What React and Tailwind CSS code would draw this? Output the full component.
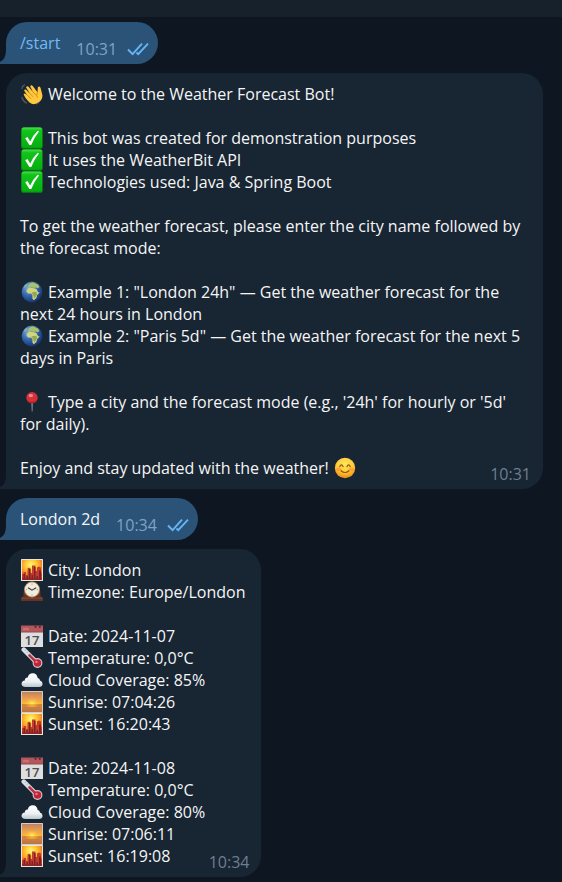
function Svg({ label, children }) {
  return (
    <svg role="img" aria-label={label} viewBox="0 0 22 22" className="mr-[5px] ml-px inline-block size-[22px] align-top">
      {children}
    </svg>
  );
}

function Wave() {
  return (
    <Svg label="Waving hand">
      <g fill="none" stroke="#46525c" strokeWidth="1.5" strokeLinecap="round">
        <path d="M1 5.5Q1.2 3 3.5 2M19 17Q18 19.8 15.5 20.8M1 14.5Q2 18.5 5.5 20" />
      </g>
      <path d="M8.5 19.5C5 16 3.5 13.5 2.6 11.2Q3.3 9.8 5 11.2L6.4 12.4 3.2 7.7Q3.5 6 5.1 6.8L9 10.7 5.1 4.5Q5.7 2.6 7.5 3.8L12 9 9.2 3.4Q10 1.6 11.7 2.9L16.5 9.3 16.8 4.4Q18.1 2.4 19.5 4.8L21.3 11.4Q22 16.5 18 19 13 23 8.5 19.5Z" fill="#ffc83d" />
      <path d="M6.4 12.4 9.8 15.5M9 10.7 12 13.6M12 9 14.8 12M16.5 9.3Q14.6 12.4 16.4 14.4" fill="none" stroke="#d88716" strokeWidth=".9" strokeLinecap="round" />
    </Svg>
  );
}

function Check() {
  return (
    <Svg label="Check">
      <defs>
        <linearGradient id="green" x2="0" y2="1">
          <stop stopColor="#4be04b" />
          <stop offset=".15" stopColor="#12c41c" />
          <stop offset="1" stopColor="#06ae0e" />
        </linearGradient>
      </defs>
      <rect x=".1" y=".2" width="21.6" height="21.6" rx="2.6" fill="#078a10" />
      <rect x=".7" y=".6" width="20.4" height="20.2" rx="2.2" fill="url(#green)" />
      <path d="M4.2 11.3 6.5 10.1 9.2 14.4Q12 8.2 16.8 3.8L18 4.4Q13.2 10.2 10.3 17.9L8.4 18Z" fill="#fff" />
    </Svg>
  );
}

function Globe() {
  return (
    <Svg label="Globe">
      <defs>
        <radialGradient id="sea" cx=".35" cy=".3" r=".75">
          <stop stopColor="#86b4dc" />
          <stop offset=".5" stopColor="#3568ae" />
          <stop offset="1" stopColor="#12306c" />
        </radialGradient>
      </defs>
      <circle cx="11" cy="11" r="10.4" fill="url(#sea)" />
      <path d="M7 4.2Q8.4 1.8 12 1.2L17 3.4 18.5 6 16.8 7.2 14.5 6.5 12.5 7 10.5 5.8 8 6.8Z" fill="#a9c26a" />
      <path d="M6.2 8.3Q8.8 6.3 11.3 7.1L15.2 7.7 17.2 11.2 18.8 11.4 16.2 14 15.4 16.9 12.8 19.2 11.5 17.8 11.4 14 10.1 12.5 6.9 12.4 5.4 10.3Z" fill="#d3d47e" />
      <path d="M10.5 11.2 15.5 10.8 16 13.8 13.4 17.5 12 14Z" fill="#8fa956" />
      <path d="M2.5 6.5Q4 3.6 6.5 2.5L6 4.5 4 6.6Z" fill="#8eb5a0" />
    </Svg>
  );
}

function Pin() {
  return (
    <Svg label="Pin">
      <path d="M10.2 10h1.8l-.4 10.5h-.9Z" fill="#7e878f" />
      <circle cx="11" cy="6.8" r="5.7" fill="#d5303c" />
      <path d="M5.9 9.2A5.7 5.7 0 0 0 16.3 8.7Q11 13 5.9 9.2" fill="#a91d2d" />
      <ellipse cx="9.8" cy="4.6" rx="2.3" ry="1.6" fill="#f58a87" />
    </Svg>
  );
}

function Smile() {
  return (
    <Svg label="Smile">
      <defs>
        <radialGradient id="face" cx=".5" cy=".3" r=".7">
          <stop stopColor="#ffe65c" />
          <stop offset=".6" stopColor="#ffc936" />
          <stop offset="1" stopColor="#ed8a13" />
        </radialGradient>
      </defs>
      <circle cx="11" cy="11" r="10.2" fill="url(#face)" />
      <ellipse cx="4.8" cy="12.3" rx="2.6" ry="1.9" fill="#ff8b32" opacity=".6" />
      <ellipse cx="17.2" cy="12.3" rx="2.6" ry="1.9" fill="#ff8b32" opacity=".6" />
      <path d="M5.8 9.6Q7.4 6.2 9 9.6M13 9.6Q14.6 6.2 16.2 9.6M7 13.8Q11 17.2 15 13.8" fill="none" stroke="#8a540d" strokeWidth="1.2" strokeLinecap="round" />
    </Svg>
  );
}

function Sunset() {
  return (
    <Svg label="City sunset">
      <defs>
        <radialGradient id="dusk" cx=".45" cy=".25" r=".8">
          <stop stopColor="#fff58a" />
          <stop offset=".25" stopColor="#ffd93f" />
          <stop offset=".55" stopColor="#f9a229" />
          <stop offset="1" stopColor="#d9481f" />
        </radialGradient>
      </defs>
      <rect width="22" height="22" rx=".6" fill="#efe3d8" />
      <path d="M1 1h20v20H1Z" fill="url(#dusk)" />
      <path d="M1 21v-6h1.5v-2H5v3h1.5V9.5L8 8.5l1.5 1V14H11V6.5h3.5V12H16V8.5l2-1 2 1V14h1v7Z" fill="#c43c2b" />
      <path d="M2.5 21v-6H4v6ZM5.5 21v-4H7v4ZM8 21V10h1.5v11ZM10.5 21v-5H12v5ZM13 21V8h1.5v13ZM15.5 21v-4H17v4ZM18 21v-9.500h2V21Z" fill="#7d2028" />
      <path d="M1 19h20v2H1Z" fill="#8c2428" opacity=".7" />
    </Svg>
  );
}

function Clock() {
  return (
    <Svg label="Clock">
      <path d="M0 20v-3.500l2.500-1.500V11Q3 9 4 8q.5-7.500 7-7.500T18 8q1 1 1.500 3v4l2.500 1.500V20Z" fill="#633327" />
      <path d="M1 17.200h20" stroke="#8a4b37" strokeWidth="1" />
      <circle cx="11" cy="8.500" r="7.900" fill="#b9986c" />
      <circle cx="11" cy="8.500" r="7" fill="#f1ebdc" />
      <path d="M7 6.700 11 9.200l4.200-2.400" fill="none" stroke="#373536" strokeWidth="1.100" />
      <path d="M11 2.700v1M11 13.500v1M5.100 8.600h1M15.900 8.600h1" stroke="#8a8074" strokeWidth=".8" />
    </Svg>
  );
}

function Calendar() {
  return (
    <Svg label="Calendar, 17">
      <path d="M0 5h22v17H0Z" fill="#dedede" />
      <path d="M0 .5h22v6.500H0Z" fill="#b4565b" />
      <path d="M0 6.700h22v.8H0Z" fill="#93454b" />
      <path d="M3 3v2.400M5 2.600v2.800M7 3v2.400" stroke="#e09a9c" strokeWidth=".8" />
      <circle cx="14.500" cy="1.800" r="1.100" fill="#542a32" />
      <circle cx="18.800" cy="1.800" r="1.100" fill="#542a32" />
      <text x="11" y="19.500" textAnchor="middle" fontSize="13" fontWeight="600" fill="#4d4d50">17</text>
    </Svg>
  );
}

function Thermometer() {
  return (
    <Svg label="Thermometer">
      <path d="m2.800 2.700 13 13" stroke="#d9e0e5" strokeWidth="4.600" strokeLinecap="round" />
      <circle cx="16.500" cy="16" r="4.900" fill="#c9cfd6" />
      <path d="m8.500 8.400 8 8" stroke="#c22b3b" strokeWidth="2.600" strokeLinecap="round" />
      <circle cx="16.500" cy="16" r="3.800" fill="#c6233a" />
      <path d="m5.200 2.500-1 1M7.200 4.500l-1 1M9.200 6.500l-1 1M11.200 8.500l-1 1" stroke="#747d85" strokeWidth=".8" />
      <circle cx="15.500" cy="14.900" r="1.200" fill="#f07a88" />
    </Svg>
  );
}

function Cloud() {
  return (
    <Svg label="Cloud">
      <defs>
        <linearGradient id="mist" x2="0" y2="1">
          <stop stopColor="#fff" />
          <stop offset=".6" stopColor="#edf1f4" />
          <stop offset="1" stopColor="#b9c6cf" />
        </linearGradient>
      </defs>
      <path d="M4.600 18Q.5 17.800.5 14.800.8 11.800 3.800 11.400 3.800 8.600 6.700 8.500 8 4.200 11.800 4.300 16 4.400 16.700 8.900 18.800 9 19 11.500 21.600 12.200 21.600 14.900 21.300 17.800 18 18Z" fill="url(#mist)" />
    </Svg>
  );
}

function Sunrise() {
  return (
    <Svg label="Sunrise">
      <defs>
        <linearGradient id="sky" x2="0" y2="1">
          <stop stopColor="#c08163" />
          <stop offset=".4" stopColor="#f0a548" />
          <stop offset=".58" stopColor="#fbb437" />
          <stop offset=".62" stopColor="#dc8a34" />
          <stop offset="1" stopColor="#b5744b" />
        </linearGradient>
        <radialGradient id="glow">
          <stop stopColor="#fff07a" />
          <stop offset=".3" stopColor="#ffd449" stopOpacity=".9" />
          <stop offset="1" stopColor="#ffb938" stopOpacity="0" />
        </radialGradient>
      </defs>
      <rect width="22" height="22" rx=".6" fill="#dccabf" />
      <path d="M1 1h20v20H1Z" fill="url(#sky)" />
      <path d="m11 5 .7 5 4.300-3-3 4 7 1.500H2L9 11 6 7l4.300 3Z" fill="#ffcb56" opacity=".45" />
      <ellipse cx="11" cy="12.500" rx="8" ry="5" fill="url(#glow)" />
      <path d="M1 14h20M3 16.500h16" stroke="#c97b35" strokeWidth=".6" />
    </Svg>
  );
}

function Ticks() {
  return (
    <svg role="img" aria-label="Read" viewBox="0 0 22 14" className="h-3.5 w-[22px]">
      <path d="m1 7.500 4.600 4.600L15 1.600M9.500 10.500l1.700 1.600L21 1.600" fill="none" stroke="#64b5f5" strokeWidth="1.900" />
    </svg>
  );
}

function Tail({ className }) {
  return (
    <svg aria-hidden="true" viewBox="0 0 6 14" className={`absolute bottom-0 -left-1.5 h-3.5 w-1.5 ${className}`}>
      <path d="M6 0Q6 9 0 12V14H6Z" fill="currentColor" />
    </svg>
  );
}

function Sent({ time, children }) {
  return (
    <article className="relative flex w-fit rounded-[21px] rounded-bl-none bg-[#2b5378] py-2.5 pr-[9px] pl-3.5">
      <Tail className="text-[#2b5378]" />
      <p className="mr-4">{children}</p>
      <footer className="-mb-1.5 flex items-center gap-2.5 pt-1.5 text-[#7ea3c6]">
        <time>{time}</time>
        <Ticks />
      </footer>
    </article>
  );
}

function Received({ time, children }) {
  return (
    <article className="relative w-fit rounded-[21px] rounded-bl-none bg-[#182533] py-2.5 pr-4 pl-3.5">
      <Tail className="text-[#182533]" />
      {children}
      <time className="absolute right-3 bottom-1 text-[#6d7f8f]">{time}</time>
    </article>
  );
}

function Day({ date, cloud, sunrise, sunset }) {
  return (
    <section className="mt-[22px]">
      <p><Calendar />Date: {date}</p>
      <p><Thermometer />Temperature: 0,0°C</p>
      <p><Cloud />Cloud Coverage: {cloud}</p>
      <p><Sunrise />Sunrise: {sunrise}</p>
      <p><Sunset />Sunset: {sunset}</p>
    </section>
  );
}

export default function App() {
  return (
    <div className="min-h-screen bg-[#0e1621] font-['Open_Sans','Noto_Sans',sans-serif] text-base leading-[22px] text-[#f5f5f5]">
      <header className="h-[17px] bg-[#17212b]" />
      <main className="flex flex-col gap-[9px] pt-[5px] pr-[19px] pb-1 pl-1.5">
        <Sent time="10:31"><a href="#start" className="text-[#73b9f5]">/start</a></Sent>
        <Received time="10:31">
          <p><Wave />Welcome to the Weather Forecast Bot!</p>
          <ul className="my-[22px]">
            <li><Check />This bot was created for demonstration purposes</li>
            <li><Check />It uses the WeatherBit API</li>
            <li><Check />Technologies used: Java &amp; Spring Boot</li>
          </ul>
          <p>To get the weather forecast, please enter the city name followed by the forecast mode:</p>
          <div className="my-[22px]">
            <p><Globe />Example 1: "London 24h" — Get the weather forecast for the next 24 hours in London</p>
            <p><Globe />Example 2: "Paris 5d" — Get the weather forecast for the next 5 days in Paris</p>
          </div>
          <p><Pin />Type a city and the forecast mode (e.g., '24h' for hourly or '5d' for daily).</p>
          <p className="mt-[22px]">Enjoy and stay updated with the weather! <Smile /></p>
        </Received>
        <Sent time="10:34">London 2d</Sent>
        <Received time="10:34">
          <p><Sunset />City: London</p>
          <p><Clock />Timezone: Europe/London</p>
          <Day date="2024-11-07" cloud="85%" sunrise="07:04:26" sunset="16:20:43" />
          <Day date="2024-11-08" cloud="80%" sunrise="07:06:11" sunset="16:19:08" />
        </Received>
      </main>
    </div>
  );
}
